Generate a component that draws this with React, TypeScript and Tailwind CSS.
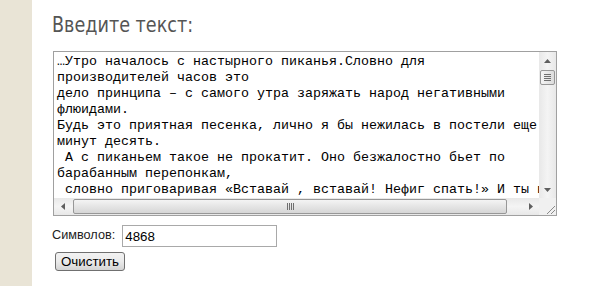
import { useState } from 'react';

const initialText = `…Утро началось с настырного пиканья.Словно для
производителей часов это
дело принципа – с самого утра заряжать народ негативными
флюидами.
Будь это приятная песенка, лично я бы нежилась в постели еще
минут десять.
 А с пиканьем такое не прокатит. Оно безжалостно бьет по
барабанным перепонкам,
 словно приговаривая «Вставай , вставай! Нефиг спать!» И ты встаешь.
Бредешь на кухню, ставишь чайник и смотришь в окно.
Там серо, мокро и совсем не хочется никуда идти.`;

const Arrow = ({ dir }: { dir: 'up' | 'down' | 'left' | 'right' }) => {
  const pts = {
    up: '0,4 3.5,0 7,4',
    down: '0,0 3.5,4 7,0',
    left: '4,0 0,3.5 4,7',
    right: '0,0 4,3.5 0,7',
  }[dir];
  const vertical = dir === 'up' || dir === 'down';
  return (
    <svg width={vertical ? 7 : 4} height={vertical ? 4 : 7} viewBox={vertical ? '0 0 7 4' : '0 0 4 7'}>
      <polygon points={pts} fill="#5f5f5f" />
    </svg>
  );
};

const App = () => {
  const [text, setText] = useState(initialText);
  const count = text.length > 0 ? 4868 : 0;

  return (
    <div className="flex min-h-screen bg-white">
      <div className="w-[32px] shrink-0 bg-[#e9e4d6]" />
      <div className="pl-[21px] pt-[11px]">
        <h1 className="h-[28px]">
          <span className="inline-block origin-left [transform:scaleX(0.8)] font-['DejaVu_Sans',sans-serif] text-[22px] leading-[28px] text-[#555555] -ml-px">
            Введите текст:
          </span>
        </h1>

        {/* Textarea with classic scrollbars */}
        <div className="mt-[12px] grid grid-cols-[485px_17px] grid-rows-[146px_17px] border border-[#a0a0a0] w-[504px]">
          <textarea
            value={text}
            onChange={(e) => setText(e.target.value)}
            wrap="off"
            className="resize-none overflow-hidden whitespace-pre bg-white pl-[3px] pt-[2px] font-['Liberation_Mono',monospace] text-[13.33px] leading-[16px] text-black outline-none"
          />

          {/* vertical scrollbar */}
          <div className="flex flex-col bg-gradient-to-r from-[#e8e8e8] via-[#f4f4f4] to-[#e8e8e8]">
            <div className="flex h-[17px] items-center justify-center">
              <Arrow dir="up" />
            </div>
            <div className="mx-px mt-px flex h-[15px] flex-col items-center justify-center gap-px rounded-[2px] border border-[#979797] bg-gradient-to-r from-[#f4f4f4] to-[#dcdcdc]">
              <div className="h-px w-[7px] bg-[#6f6f6f]" />
              <div className="h-px w-[7px] bg-[#6f6f6f]" />
              <div className="h-px w-[7px] bg-[#6f6f6f]" />
              <div className="h-px w-[7px] bg-[#6f6f6f]" />
            </div>
            <div className="flex-1" />
            <div className="flex h-[17px] items-center justify-center">
              <Arrow dir="down" />
            </div>
          </div>

          {/* horizontal scrollbar */}
          <div className="flex bg-gradient-to-b from-[#e8e8e8] via-[#f4f4f4] to-[#e8e8e8]">
            <div className="flex w-[17px] items-center justify-center">
              <Arrow dir="left" />
            </div>
            <div className="my-px ml-[2px] flex w-[434px] items-center justify-center gap-px rounded-[2px] border border-[#979797] bg-gradient-to-b from-[#f4f4f4] to-[#d6d6d6]">
              <div className="h-[7px] w-px bg-[#6f6f6f]" />
              <div className="h-[7px] w-px bg-[#6f6f6f]" />
              <div className="h-[7px] w-px bg-[#6f6f6f]" />
              <div className="h-[7px] w-px bg-[#6f6f6f]" />
            </div>
            <div className="flex-1" />
            <div className="flex w-[17px] items-center justify-center">
              <Arrow dir="right" />
            </div>
          </div>

          {/* corner with resize grip */}
          <div className="flex items-end justify-end bg-[#f0f0f0]">
            <svg width="12" height="12" viewBox="0 0 12 12">
              <line x1="11" y1="3" x2="3" y2="11" stroke="#8a8a8a" strokeWidth="1" />
              <line x1="11" y1="7" x2="7" y2="11" stroke="#8a8a8a" strokeWidth="1" />
            </svg>
          </div>
        </div>

        <div className="mt-[9px] flex items-center font-['Liberation_Sans',Arial,sans-serif] text-[12.7px] text-[#222222]">
          <span className="ml-[-1px]">Символов:</span>
          <input
            readOnly
            value={count}
            className="ml-[7px] h-[22px] w-[155px] border border-[#a9a9a9] px-[2px] text-[13.33px] text-black outline-none"
          />
        </div>

        <button
          onClick={() => setText('')}
          className="mt-[5px] ml-[2px] h-[19px] rounded-[3px] border border-[#707070] bg-gradient-to-b from-[#f2f2f2] via-[#ebebeb] to-[#d4d4d4] px-[5px] font-['Liberation_Sans',Arial,sans-serif] text-[13.33px] leading-[15px] text-black"
        >
          Очистить
        </button>
      </div>
    </div>
  );
};

export default App;
